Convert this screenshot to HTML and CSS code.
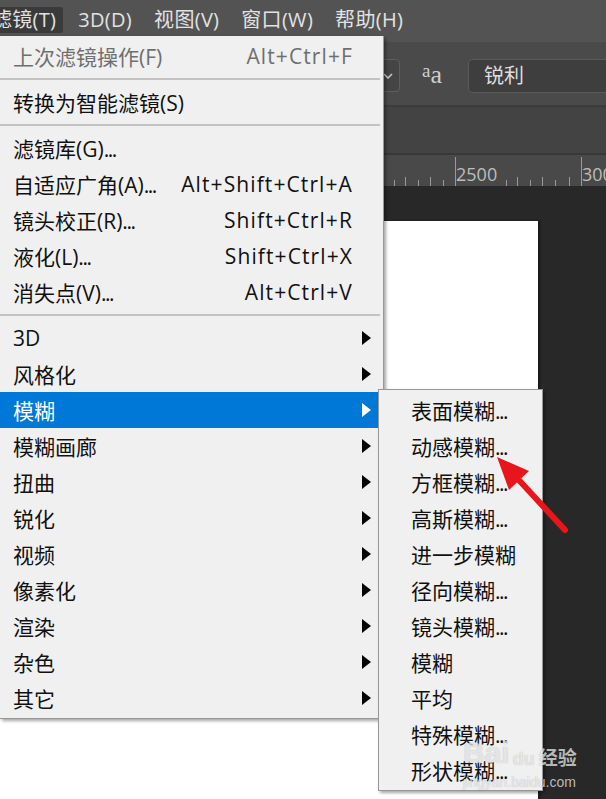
FILE: index.html
```html
<!DOCTYPE html>
<html lang="zh-CN">
<head>
<meta charset="utf-8">
<title>滤镜菜单</title>
<link rel="stylesheet" href="styles.css">
</head>
<body>
<div class="app">
  <div class="menubar">
    <div class="mb-item active">滤镜(T)</div>
    <div class="mb-item">3D(D)</div>
    <div class="mb-item">视图(V)</div>
    <div class="mb-item">窗口(W)</div>
    <div class="mb-item">帮助(H)</div>
  </div>
  <div class="optbar">
    <div class="dropdown">
      <svg class="chev" width="10" height="6" viewBox="0 0 10 6"><polyline points="1,1 5,5 9,1" fill="none" stroke="#c8c8c8" stroke-width="1.6"/></svg>
    </div>
    <div class="aa"><span class="aa-s">a</span><span class="aa-b">a</span></div>
    <div class="field">锐利</div>
  </div>
  <div class="tabbar"></div>
  <div class="ruler">
    <svg width="606" height="31" viewBox="0 0 606 31">
      <g stroke="#9a9a9a" stroke-width="1">
        <line x1="394.5" y1="25" x2="394.5" y2="31"/>
        <line x1="405.5" y1="22" x2="405.5" y2="31"/>
        <line x1="418.5" y1="25" x2="418.5" y2="31"/>
        <line x1="430.5" y1="22" x2="430.5" y2="31"/>
        <line x1="443.5" y1="25" x2="443.5" y2="31"/>
        <line x1="455.5" y1="2" x2="455.5" y2="31"/>
        <line x1="506.5" y1="25" x2="506.5" y2="31"/>
        <line x1="517.5" y1="22" x2="517.5" y2="31"/>
        <line x1="530.5" y1="25" x2="530.5" y2="31"/>
        <line x1="542.5" y1="22" x2="542.5" y2="31"/>
        <line x1="555.5" y1="25" x2="555.5" y2="31"/>
        <line x1="569.5" y1="22" x2="569.5" y2="31"/>
        <line x1="581.5" y1="2" x2="581.5" y2="31"/>
      </g>
    </svg>
    <span class="rl rl1">2500</span>
    <span class="rl rl2">3000</span>
  </div>
  <div class="canvas">
    <div class="doc"></div>
  </div>
</div>

<div class="menu main">
  <div class="item disabled"><span>上次滤镜操作(F)</span><span class="sc">Alt+Ctrl+F</span></div>
  <div class="sep"></div>
  <div class="item"><span>转换为智能滤镜(S)</span></div>
  <div class="sep"></div>
  <div class="item"><span>滤镜库(G)<span class="dots">...</span></span></div>
  <div class="item"><span>自适应广角(A)<span class="dots">...</span></span><span class="sc">Alt+Shift+Ctrl+A</span></div>
  <div class="item"><span>镜头校正(R)<span class="dots">...</span></span><span class="sc">Shift+Ctrl+R</span></div>
  <div class="item"><span>液化(L)<span class="dots">...</span></span><span class="sc">Shift+Ctrl+X</span></div>
  <div class="item"><span>消失点(V)<span class="dots">...</span></span><span class="sc">Alt+Ctrl+V</span></div>
  <div class="sep"></div>
  <div class="item sub"><span>3D</span><i class="arrow"></i></div>
  <div class="item sub"><span>风格化</span><i class="arrow"></i></div>
  <div class="item sub hl"><span>模糊</span><i class="arrow"></i></div>
  <div class="item sub"><span>模糊画廊</span><i class="arrow"></i></div>
  <div class="item sub"><span>扭曲</span><i class="arrow"></i></div>
  <div class="item sub"><span>锐化</span><i class="arrow"></i></div>
  <div class="item sub"><span>视频</span><i class="arrow"></i></div>
  <div class="item sub"><span>像素化</span><i class="arrow"></i></div>
  <div class="item sub"><span>渲染</span><i class="arrow"></i></div>
  <div class="item sub"><span>杂色</span><i class="arrow"></i></div>
  <div class="item sub"><span>其它</span><i class="arrow"></i></div>
</div>

<div class="menu submenu">
  <div class="item"><span>表面模糊<span class="dots">...</span></span></div>
  <div class="item"><span>动感模糊<span class="dots">...</span></span></div>
  <div class="item"><span>方框模糊<span class="dots">...</span></span></div>
  <div class="item"><span>高斯模糊<span class="dots">...</span></span></div>
  <div class="item"><span>进一步模糊</span></div>
  <div class="item"><span>径向模糊<span class="dots">...</span></span></div>
  <div class="item"><span>镜头模糊<span class="dots">...</span></span></div>
  <div class="item"><span>模糊</span></div>
  <div class="item"><span>平均</span></div>
  <div class="item"><span>特殊模糊<span class="dots">...</span></span></div>
  <div class="item"><span>形状模糊<span class="dots">...</span></span></div>
</div>

<svg class="pointer" width="606" height="799" viewBox="0 0 606 799">
  <line x1="517" y1="478" x2="565" y2="530" stroke="#e8161c" stroke-width="6" stroke-linecap="round"/>
  <polygon points="497,457 529,471 509,490" fill="#e8161c"/>
</svg>

<div class="watermark">
  <div class="wm-top"><span class="wm-bai">Bai</span><span class="wm-du">du</span><span class="wm-jy">经验</span></div>
  <div class="wm-url">jingyan.baidu.com</div>
</div>
</body>
</html>
```

FILE: styles.css
```css
html, body {
  margin: 0;
  padding: 0;
}
body {
  width: 606px;
  height: 799px;
  overflow: hidden;
  position: relative;
  background: #282828;
  font-family: "Open Sans", "Noto Sans CJK SC", sans-serif;
}
.app {
  display: flex;
  flex-direction: column;
  height: 799px;
}
.menubar {
  flex: none;
  height: 42px;
  background: #535353;
  display: flex;
  align-items: flex-start;
  padding-top: 7px;
  box-sizing: border-box;
  gap: 7px;
  margin-left: -16px;
}
.mb-item {
  height: 26px;
  line-height: 26px;
  padding: 0 7px 0 8px;
  border-radius: 3px;
  color: #e2e2e2;
  font-size: 20px;
  letter-spacing: 0.3px;
  white-space: nowrap;
}
.mb-item.active {
  background: #3a3a3a;
}
.optbar {
  flex: none;
  height: 63px;
  background: #4a4a4a;
  border-bottom: 2px solid #3b3b3b;
  display: flex;
  align-items: center;
  overflow: hidden;
}
.dropdown {
  margin-left: 340px;
  margin-top: 4px;
  width: 60px;
  height: 33px;
  box-sizing: border-box;
  border: 1px solid #5e5e5e;
  border-radius: 4px;
  background: #454545;
  display: flex;
  align-items: center;
  justify-content: flex-end;
  padding-right: 6px;
  flex: none;
}
.aa {
  margin-left: 22px;
  width: 27px;
  color: #cfcfcf;
  font-family: "Liberation Serif", serif;
  display: flex;
  align-items: baseline;
  flex: none;
  margin-top: 2px;
}
.aa-s {
  font-size: 19px;
  position: relative;
  top: -6px;
}
.aa-b {
  font-size: 26px;
  margin-left: 0;
}
.field {
  margin-left: 19px;
  margin-top: 4px;
  flex: none;
  width: 200px;
  height: 34px;
  box-sizing: border-box;
  border: 1px solid #5a5a5a;
  border-radius: 4px;
  background: #3e3e3e;
  color: #dedede;
  font-size: 20px;
  line-height: 32px;
  padding-left: 15px;
}
.tabbar {
  flex: none;
  height: 46px;
  background: #434343;
  border-bottom: 2px solid #383838;
}
.ruler {
  flex: none;
  height: 31px;
  background: #494949;
  position: relative;
  overflow: hidden;
}
.ruler svg {
  display: block;
}
.rl {
  position: absolute;
  top: 8px;
  font-size: 18px;
  color: #bdbdbd;
  line-height: 22px;
}
.rl1 { left: 456px; }
.rl2 { left: 582px; }
.canvas {
  flex: 1;
  min-height: 0;
  overflow: hidden;
  background: #282828;
  padding-top: 35px;
}
.doc {
  width: 538px;
  height: 600px;
  background: #ffffff;
  box-shadow: 2px 0 2px rgba(0,0,0,0.4);
}

.menu {
  position: absolute;
  background: #f0f0f0;
  box-sizing: border-box;
  padding: 2px 0;
  color: #111;
  font-size: 21px;
}
.menu.main {
  left: 0;
  top: 36px;
  width: 384px;
  border-right: 1px solid #979797;
  border-bottom: 1px solid #979797;
  box-shadow: 2px 2px 3px rgba(0,0,0,0.35);
}
.submenu {
  left: 378px;
  top: 389px;
  width: 165px;
  border: 1px solid #979797;
  box-shadow: 2px 2px 3px rgba(0,0,0,0.35);
}
.item {
  height: 36px;
  display: flex;
  align-items: center;
  padding: 0 12px 0 13px;
  white-space: nowrap;
}
.submenu .item {
  padding-left: 32px;
}
.dots {
  letter-spacing: -1.5px;
}
.item .sc {
  margin-left: auto;
  margin-right: 18px;
  letter-spacing: 1.1px;
}
.item.disabled {
  color: #6f6f6f;
}
.item.hl {
  background: #0078d7;
  color: #ffffff;
}
.arrow {
  margin-left: auto;
  width: 0;
  height: 0;
  border-top: 7px solid transparent;
  border-bottom: 7px solid transparent;
  border-left: 9px solid #000;
}
.item.hl .arrow {
  border-left-color: #ffffff;
}
.sep {
  height: 10px;
  display: flex;
  align-items: center;
  margin-right: 3px;
}
.sep::before {
  content: "";
  flex: 1;
  height: 2px;
  background: #c3c3c3;
}
.pointer {
  position: absolute;
  left: 0;
  top: 0;
  pointer-events: none;
}
.watermark {
  position: absolute;
  left: 463px;
  top: 738px;
  color: rgba(255,255,255,0.7);
  text-shadow: 0 0 1px rgba(0,0,0,0.3);
  font-family: "Liberation Sans", "Noto Sans CJK SC", sans-serif;
  pointer-events: none;
}
.wm-top {
  display: flex;
  align-items: flex-end;
  line-height: 1;
}
.wm-bai {
  font-size: 30px;
  font-weight: bold;
}
.wm-du {
  font-size: 18px;
  font-weight: bold;
  margin-left: 3px;
}
.wm-jy {
  font-size: 19px;
  font-weight: bold;
  margin-left: 4px;
}
.wm-url {
  font-size: 14px;
  margin-top: 6px;
}
```
